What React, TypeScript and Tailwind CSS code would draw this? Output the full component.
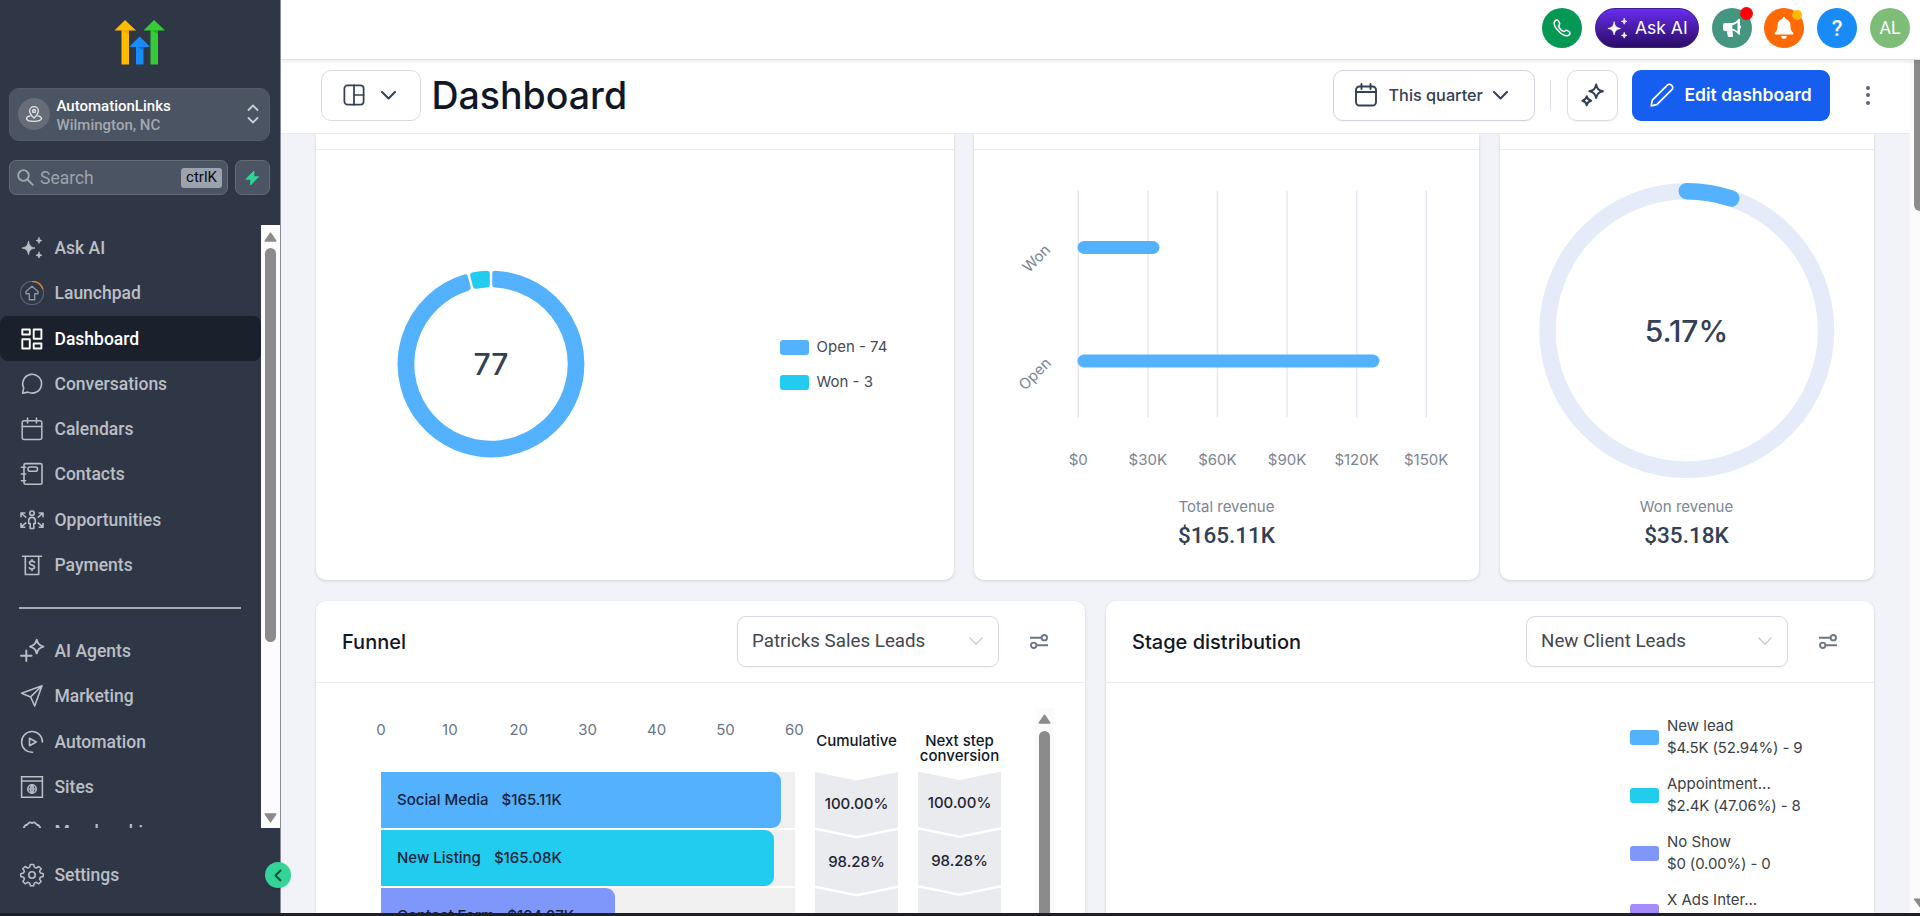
import type { ReactNode } from "react";

type IconProps = { children: ReactNode; className?: string; size?: number; w?: number };

function Ico({ children, className = "", size = 24, w = 1.5 }: IconProps) {
  return (
    <svg
      width={size}
      height={size}
      viewBox="0 0 24 24"
      fill="none"
      stroke="currentColor"
      strokeWidth={w}
      strokeLinecap="round"
      strokeLinejoin="round"
      className={`shrink-0 ${className}`}
    >
      {children}
    </svg>
  );
}

function Chevron({ className = "" }: { className?: string }) {
  return (
    <svg width="15" height="9" viewBox="0 0 15 9" fill="none" stroke="currentColor" strokeWidth="2" strokeLinecap="round" strokeLinejoin="round" className={`shrink-0 ${className}`}>
      <path d="M1 1l6.5 6.5L14 1" />
    </svg>
  );
}

const sparkleSolid = (
  <g fill="currentColor" stroke="currentColor" strokeWidth="0.8">
    <path d="M8.500 5.400C9.600 10 10.500 10.900 15 12c-4.500 1.100-5.400 2-6.500 6.600C7.400 14 6.500 13.100 2 12c4.500-1.100 5.400-2 6.500-6.600z" />
    <path d="M19 1.700c.5 2 .9 2.400 2.900 2.900-2 .5-2.400.9-2.900 2.900-.5-2-.9-2.400-2.900-2.900 2-.5 2.400-.9 2.900-2.900z" />
    <path d="M19 16.300c.5 2 .9 2.400 2.900 2.900-2 .5-2.400.9-2.900 2.900-.5-2-.9-2.400-2.900-2.900 2-.5 2.400-.9 2.900-2.900z" />
  </g>
);

const calendar = (
  <>
    <rect x="2.200" y="3.800" width="19.600" height="18.700" rx="2" />
    <path d="M2.200 9.500h19.600M7.500 1v5M16.500 1v5" />
  </>
);

const topItems = [
  { label: "Ask AI", icon: <Ico>{sparkleSolid}</Ico> },
  {
    label: "Launchpad",
    icon: (
      <Ico w={1.400}>
        <circle cx="12" cy="12" r="11.600" stroke="#566072" />
        <path d="M12 .4a11.600 11.600 0 0 1 10.900 7.600" stroke="#dd8433" strokeLinecap="butt" />
        <path d="M12 5.300l6 5.200v2.200h-3.300v6H9.300v-6H6v-2.200z" stroke="#8d94a1" />
      </Ico>
    ),
  },
  {
    label: "Dashboard",
    active: true,
    icon: (
      <Ico w={1.900}>
        <path d="M2.300 2.500h7.500v5H2.300zM13.700 2.500h7.700v9.300h-7.700zM2.300 12.200h7.500v9.300H2.300zM13.700 16.500h7.700v5h-7.700z" />
      </Ico>
    ),
  },
  {
    label: "Conversations",
    icon: (
      <Ico w={1.600}>
        <path d="M2.600 21.300l1.100-5.500A9.400 9.400 0 1 1 8 20.100z" />
      </Ico>
    ),
  },
  { label: "Calendars", icon: <Ico w={1.500}>{calendar}</Ico> },
  {
    label: "Contacts",
    icon: (
      <Ico w={1.600}>
        <rect x="4" y="1.600" width="18" height="20.600" rx="1.500" />
        <rect x="8" y="5" width="9.500" height="4.300" rx="2" />
        <path d="M1.400 5.200h4.200M1.400 12h4.200M1.400 18.700h4.200" />
      </Ico>
    ),
  },
  {
    label: "Opportunities",
    icon: (
      <Ico w={1.600}>
        <circle cx="12" cy="5.200" r="2.200" />
        <path d="M12 9.400c2.400 0 3.300 1.300 3.300 3.100v3h-1.500v5h-3.600v-5H8.700v-3c0-1.800.9-3.100 3.300-3.100z" />
        <path d="M1 8.500V5h3.500M1.500 5.500L5.600 9M1 15.700v3.500h3.500M1.500 18.700l4.100-3.500M19.500 5H23v3.500M22.500 5.500L18.400 9M19.500 19.200H23v-3.500M22.500 18.700l-4.100-3.500" strokeLinecap="square" />
      </Ico>
    ),
  },
  {
    label: "Payments",
    icon: (
      <Ico w={1.600}>
        <path d="M2.500 3.200h19M5.300 3.200v18.300h13.400V3.200" />
        <path d="M14.500 9.300c-.5-.8-1.400-1.100-2.500-1.100-1.500 0-2.500.7-2.500 1.900 0 2.700 5 1.300 5 4 0 1.200-1 1.900-2.500 1.900-1.200 0-2.200-.4-2.600-1.200M12 6.800v1.400M12 16v1.400" strokeWidth="1.700" />
      </Ico>
    ),
  },
];

const bottomItems = [
  {
    label: "AI Agents",
    icon: (
      <Ico w={1.900} className="overflow-visible">
        <path d="M16.700.7c1.200 4.200 2.500 5.500 6.700 6.900-4.200 1.300-5.500 2.600-6.700 6.800-1.200-4.200-2.500-5.500-6.700-6.800 4.200-1.400 5.500-2.700 6.700-6.900zM6.300 11.500v10.600M1 16.800h10.600" />
      </Ico>
    ),
  },
  {
    label: "Marketing",
    icon: (
      <Ico w={1.600}>
        <path d="M22 1.700L1.600 9.300l9 3.600L14.700 22zM22 1.700L10.600 12.900" />
      </Ico>
    ),
  },
  {
    label: "Automation",
    icon: (
      <Ico w={1.600}>
        <path d="M12.500 22.300A10.400 10.400 0 1 1 22.400 12" />
        <path d="M9.500 8.300v7.400l6.700-3.700z" />
      </Ico>
    ),
  },
  {
    label: "Sites",
    icon: (
      <Ico w={1.500}>
        <path d="M1.600 1.700h20.800v20.600H1.600zM1.600 6h20.800" strokeLinejoin="miter" />
        <circle cx="12" cy="14" r="4.200" />
        <path d="M7.800 14h8.400M12 9.800v8.400M12 9.800c-2.200 2.500-2.200 5.900 0 8.400 2.200-2.500 2.200-5.900 0-8.400z" strokeWidth="1.200" />
      </Ico>
    ),
  },
  {
    label: "Memberships",
    icon: (
      <Ico w={1.800}>
        <path d="M3.500 9c.5-2.500 1.500-4 4-4.500C8.300 2.500 10 1.800 12 3c2-1.200 3.700-.5 4.500 1.500 2.500.5 3.500 2 4 4.500v11h-17z" />
      </Ico>
    ),
  },
];

function NavItem({ label, icon, active }: { label: string; icon: ReactNode; active?: boolean }) {
  return (
    <div
      className={
        active
          ? "flex h-[45.25px] shrink-0 items-center gap-[11px] rounded-lg bg-[#1a202c] pl-[19.5px] text-[17.5px] font-medium text-white"
          : "flex h-[45.25px] shrink-0 items-center gap-[11px] pl-[19.5px] text-[17.5px] font-medium text-[#bbbfc5]"
      }
    >
      {icon}
      <span>{label}</span>
    </div>
  );
}

function Triangle({ down }: { down?: boolean }) {
  return (
    <svg width="13" height="10" viewBox="0 0 13 10" className={down ? "rotate-180" : ""}>
      <path d="M6.500 1.200L11.800 9H1.200z" fill="#8b8b8b" stroke="#8b8b8b" strokeWidth="1.400" strokeLinejoin="round" />
    </svg>
  );
}

function Logo() {
  return (
    <svg width="52" height="46" viewBox="0 0 52 46">
      <path d="M7.500 11h7.500v34.500H7.500z" fill="#ffbc00" />
      <path d="M7.500 11h7.500v4z" fill="#f29f05" />
      <path d="M11 1l11 10.500H.5z" fill="#ffbc00" />
      <path d="M36.500 11H44v34.500h-7.500z" fill="#37ca37" />
      <path d="M36.500 11H44v4z" fill="#1fae1f" />
      <path d="M40 1l11 10.500H29.500z" fill="#37ca37" />
      <path d="M22 27h7.500v18.500H22z" fill="#188bf6" />
      <path d="M22 27h7.500v4.500z" fill="#0c6fcf" />
      <path d="M25.700 17.500l10.500 10.500H15z" fill="#188bf6" />
    </svg>
  );
}

function Sidebar() {
  return (
    <aside className="relative z-20 flex h-full w-[281px] shrink-0 flex-col border-r border-[#858b97] bg-[#2f3747] font-['Roboto',sans-serif]">
      <div className="flex h-[87.500px] shrink-0 items-start justify-center pt-[19px]">
        <Logo />
      </div>
      <div className="mx-[9px] flex h-[53px] w-[261px] shrink-0 items-center rounded-[10px] border border-[#535b68] bg-[#4b5462] pr-[10px] pl-[8px]">
        <div className="flex size-8 items-center justify-center rounded-full bg-[#666d78] text-[#e5e7eb]">
          <Ico size={18} w={1.800}>
            <path d="M12 17.500c-3.500-3.500-5.800-6-5.800-9.500a5.800 5.800 0 0 1 11.600 0c0 3.500-2.300 6-5.800 9.500z" />
            <circle cx="12" cy="8" r="2" />
            <path d="M7 14.500c-3 .6-5 1.800-5 3.500 0 2.300 4.500 3.800 10 3.800s10-1.500 10-3.800c0-1.700-2-2.900-5-3.500" />
          </Ico>
        </div>
        <div className="ml-[6.500px] flex-1 pt-[4px] text-[15px] leading-[19px] font-medium">
          <div className="text-white">AutomationLinks</div>
          <div className="text-[#a3a8b0]">Wilmington, NC</div>
        </div>
        <svg width="12" height="20" viewBox="0 0 12 20" fill="none" stroke="#c9ccd1" strokeWidth="1.800" strokeLinecap="round" strokeLinejoin="round">
          <path d="M1.500 6L6 1.500 10.500 6M1.500 14L6 18.500 10.500 14" />
        </svg>
      </div>
      <div className="mx-[9px] mt-[19.500px] flex h-[35px] w-[261px] shrink-0 gap-[7px]">
        <div className="flex w-[219px] items-center rounded-[7px] border border-[#636b77] bg-[#4b5462] pr-[5px] pl-[7px]">
          <svg width="17" height="17" viewBox="0 0 17 17" fill="none" stroke="#a3a8b0" strokeWidth="1.800" strokeLinecap="round">
            <circle cx="6.500" cy="6.500" r="5.300" />
            <path d="M10.500 10.500l5.300 5.300" />
          </svg>
          <span className="ml-[6px] flex-1 pt-[2px] text-[17.5px] text-[#9ca3af]">Search</span>
          <span className="flex h-[20px] w-[41px] items-center justify-center rounded-[3px] bg-[#9ca3af] text-[15px] text-[#0a0c10]">ctrlK</span>
        </div>
        <div className="flex w-[35px] items-center justify-center rounded-[7px] border border-[#636b77] bg-[#4b5462]">
          <svg width="15" height="16" viewBox="0 0 15 16" fill="#34d399" stroke="#34d399" strokeWidth="1" strokeLinejoin="round">
            <path d="M9 1L1 9.200h5L5.500 15l8-8.200H8.700z" />
          </svg>
        </div>
      </div>
      <div className="mt-[30px] flex h-[603px] shrink-0">
        <nav className="flex h-full w-[261px] flex-col overflow-hidden pt-[0.500px]">
          {topItems.map((it) => (
            <NavItem key={it.label} {...it} />
          ))}
          <div className="mt-[19px] mb-[20px] ml-[19px] h-[2px] w-[222px] shrink-0 bg-[#a5aab3]" />
          {bottomItems.map((it) => (
            <NavItem key={it.label} {...it} />
          ))}
        </nav>
        <div className="flex h-full w-[19px] flex-col items-center bg-[#fcfcfc] pt-[7px] pb-[5px]">
          <Triangle />
          <div className="mt-[6px] h-[394px] w-[11px] rounded-full bg-[#8b8b8b]" />
          <div className="flex-1" />
          <Triangle down />
        </div>
      </div>
      <div className="flex flex-1 items-center gap-[11px] pt-[11px] pb-[2px] pl-[19.500px] text-[17.5px] font-medium text-[#bbbfc5]">
        <Ico w={1.600}>
          <circle cx="12" cy="12" r="3.200" />
          <path d="M10.300 1.200h3.400l.7 2.900 2 .9 2.600-1.600 2.400 2.400-1.600 2.600.8 2 3 .7v2.900l-3 .8-.8 2 1.600 2.600-2.400 2.400-2.600-1.600-2 .9-.7 2.900h-3.400l-.7-2.900-2-.9L5 21.800l-2.400-2.400 1.600-2.600-.8-2-3-.8v-2.900l3-.7.8-2L2.600 5.800 5 3.400 7.600 5l2-.9z" transform="translate(.3 .3) scale(.975 .94)" />
        </Ico>
        <span>Settings</span>
      </div>
      <div className="absolute top-[862px] left-[265px] flex size-[26px] items-center justify-center rounded-full bg-[#34d399] text-[#14532d] shadow">
        <svg width="8" height="13" viewBox="0 0 8 13" fill="none" stroke="currentColor" strokeWidth="2" strokeLinecap="round" strokeLinejoin="round">
          <path d="M6.500 1.500l-5 5 5 5" />
        </svg>
      </div>
    </aside>
  );
}

function TopBar() {
  return (
    <div className="relative z-10 flex h-[60px] shrink-0 items-start justify-end border-b border-[#e3e3e5] bg-white pt-[8px] pr-[10px] shadow-[0_2px_4px_rgba(0,0,0,0.08)]">
      <div className="mr-[13px] flex size-10 items-center justify-center rounded-full bg-[#059855] text-white">
        <svg width="18" height="18" viewBox="0 0 18 18" fill="none" stroke="currentColor" strokeWidth="1.500" strokeLinejoin="round">
          <path d="M1.200 3.600C1.500 2.400 2.800 1 4.200 1c.8 0 1.300.9 1.900 2.100.6 1.100.9 1.800.3 2.600-.5.700-1 .9-.8 1.600.6 2 3.100 4.500 5.100 5.100.700.2.9-.3 1.600-.8.8-.6 1.500-.3 2.600.3 1.200.6 2.100 1.100 2.100 1.900 0 1.400-1.400 2.700-2.600 3C9.500 17.500.5 8.500 1.200 3.600z" />
        </svg>
      </div>
      <div className="mr-[13px] flex h-10 w-[104px] items-center gap-[6px] rounded-full border border-[#3d1c94] bg-gradient-to-b from-[#6a2cf0] to-[#2a0d66] pl-[10px] font-['Inter',sans-serif] text-[17.5px] text-white">
        <Ico size={23}>{sparkleSolid}</Ico>
        <span className="whitespace-nowrap">Ask AI</span>
      </div>
      <div className="relative mr-[12px] flex size-10 items-center justify-center rounded-full bg-[#449680]">
        <svg width="20" height="20" viewBox="0 0 20 20">
          <path d="M3 5h6.500c2.700 0 5-1.600 7-4 .6-.6 1.500-.3 1.500.6v14.300c0 .9-.9 1.200-1.500.6-1.700-2-3.700-3.500-6-3.900L11 17.500c.2 1-.3 1.500-1.200 1.500H7.200c-.8 0-1.300-.4-1.500-1.200L4.800 13H3a2 2 0 0 1-2-2V7a2 2 0 0 1 2-2z" fill="#fff" />
          <path d="M10.300 7.200c2-.4 3.700-1.300 5.200-2.700v9c-1.500-1.400-3.200-2.300-5.200-2.700z" fill="#449680" />
          <path d="M18 7.200c1.600.8 1.600 2.800 0 3.600z" fill="#fff" />
        </svg>
        <div className="absolute -top-px left-[28px] size-[13px] rounded-full bg-[#ff0008]" />
      </div>
      <div className="relative mr-[13px] flex size-10 items-center justify-center rounded-full bg-[#ff6a06]">
        <svg width="20" height="22" viewBox="0 0 20 22" fill="#fff">
          <path d="M10 0c.9 0 1.500.6 1.500 1.500v.6c3 .7 5 3.200 5 6.400 0 4.300 1 5.700 2.500 7.100.8.9.3 2-.8 2H1.800c-1.100 0-1.600-1.100-.8-2C2.500 14.200 3.500 12.800 3.500 8.500c0-3.200 2-5.700 5-6.400v-.6C8.500.6 9.100 0 10 0zM7.300 19h5.400a2.700 2.700 0 0 1-5.400 0z" />
        </svg>
        <div className="absolute top-[2px] left-[28px] size-[10px] rounded-full bg-[#ffb906]" />
      </div>
      <div className="mr-[13px] flex size-10 items-center justify-center rounded-full bg-[#188bf6] font-['Roboto',sans-serif] text-[22px] font-medium text-white">?</div>
      <div className="flex size-10 items-center justify-center rounded-full bg-[#7ebd78] font-['Roboto',sans-serif] text-[17.5px] text-white">AL</div>
    </div>
  );
}

function ActionBar() {
  return (
    <div className="flex h-[73.500px] shrink-0 items-center border-b border-[#e9eaee] bg-white pb-[2px] pl-[40px] text-[#344054]">
      <div className="flex h-[51px] w-[100px] items-center justify-between rounded-[10px] border border-[#d9dce3] pr-[24px] pl-[21px]">
        <Ico size={22} w={1.900}>
          <rect x="1.500" y="1.500" width="21" height="21" rx="3.500" />
          <path d="M12 1.500v21M12 12h10.500" />
        </Ico>
        <Chevron />
      </div>
      <h1 className="ml-[10.500px] flex-1 pt-px text-[37.5px] leading-none font-medium text-[#101828]">Dashboard</h1>
      <div className="flex h-[51px] w-[202px] items-center rounded-[10px] border border-[#d0d5dd] pl-[20.500px] shadow-[0_1px_2px_rgba(16,24,40,0.05)]">
        <Ico size={24} w={1.900}>
          <rect x="2" y="3.500" width="20" height="19" rx="3.500" />
          <path d="M2 9h20M7.500 1v5M16.500 1v5" />
        </Ico>
        <span className="mr-[10px] ml-[10.500px] text-[16.25px] font-medium">This quarter</span>
        <Chevron />
      </div>
      <div className="mx-[15.500px] h-[30px] w-px bg-[#dfe2e8]" />
      <div className="flex size-[51px] items-center justify-center rounded-[10px] border border-[#d9dce3] shadow-[0_1px_2px_rgba(16,24,40,0.05)]">
        <Ico size={25} w={1.900}>
          <path d="M15.500 1.500c1 4.200 2.300 5.500 6.500 6.500-4.200 1-5.500 2.300-6.500 6.500-1-4.200-2.300-5.500-6.500-6.500 4.200-1 5.500-2.300 6.500-6.500z" />
          <path d="M6.500 12.700c.6 2.800 1.500 3.700 4.200 4.300-2.700.7-3.600 1.600-4.200 4.300-.6-2.700-1.500-3.600-4.200-4.300 2.700-.6 3.600-1.500 4.200-4.300z" />
        </Ico>
      </div>
      <div className="ml-[14px] flex h-[51px] w-[198px] items-center gap-[11px] rounded-[9px] bg-[#155eef] pl-[18px] text-white">
        <Ico size={24} w={1.700}>
          <path d="M1.200 22.800l1.100-5.600L17.400 2.100a2.700 2.700 0 0 1 3.900 0l.6.6a2.700 2.700 0 0 1 0 3.900L6.800 21.700z" />
        </Ico>
        <span className="text-[17.5px] font-semibold whitespace-nowrap">Edit dashboard</span>
      </div>
      <div className="mr-[40.500px] ml-[36px] flex flex-col gap-[3.500px]">
        <div className="size-[4px] rounded-full bg-[#5d6675]" />
        <div className="size-[4px] rounded-full bg-[#5d6675]" />
        <div className="size-[4px] rounded-full bg-[#5d6675]" />
      </div>
    </div>
  );
}

function sector(cx: number, cy: number, r0: number, r1: number, a0: number, a1: number) {
  const round = 3;
  const pad = 1.2 + round;
  const ri = r0 + round;
  const ro = r1 - round;
  const pt = (r: number, a: number) => `${(cx + r * Math.sin(a)).toFixed(2)} ${(cy - r * Math.cos(a)).toFixed(2)}`;
  const di = Math.asin(pad / ri);
  const d = Math.asin(pad / ro);
  const large = a1 - a0 > Math.PI ? 1 : 0;
  return `M${pt(ro, a0 + d)} A${ro} ${ro} 0 ${large} 1 ${pt(ro, a1 - d)} L${pt(ri, a1 - di)} A${ri} ${ri} 0 ${large} 0 ${pt(ri, a0 + di)} Z`;
}

const split = (74 / 77) * Math.PI * 2;

function StatusCard() {
  return (
    <section className="flex h-full w-[637.500px] flex-col rounded-b-[10px] bg-white shadow-[0_1px_3px_rgba(16,24,40,0.16)]">
      <div className="h-[16px] shrink-0 border-b border-[#eaecf0]" />
      <div className="flex flex-1 items-center pb-[2px]">
        <svg width="188" height="188" viewBox="0 0 188 188" className="ml-[81px]" strokeWidth="6" strokeLinejoin="round">
          <path d={sector(94, 94, 76.7, 93.4, 0, split)} fill="#53b1fd" stroke="#53b1fd" />
          <path d={sector(94, 94, 76.7, 93.4, split, Math.PI * 2)} fill="#22ccee" stroke="#22ccee" />
          <text x="94" y="105" textAnchor="middle" className="fill-[#344054] text-[30px] font-medium">77</text>
        </svg>
        <div className="ml-[195px] flex flex-col gap-[15px] pt-[2px] text-[15px] leading-[20px] text-[#444b55]">
          <div className="flex items-center gap-[7.500px]">
            <div className="h-[15px] w-[29px] rounded-[3px] bg-[#53b1fd]" />
            Open - 74
          </div>
          <div className="flex items-center gap-[7.500px]">
            <div className="h-[15px] w-[29px] rounded-[3px] bg-[#22ccee]" />
            Won - 3
          </div>
        </div>
      </div>
    </section>
  );
}

const revenueTicks = ["$0", "$30K", "$60K", "$90K", "$120K", "$150K"];

function RevenueCard() {
  return (
    <section className="flex h-full w-[505px] flex-col items-center rounded-b-[10px] bg-white shadow-[0_1px_3px_rgba(16,24,40,0.16)]">
      <div className="h-[16px] w-full shrink-0 border-b border-[#eaecf0]" />
      <svg width="505" height="345" viewBox="974.500 149.500 505 345">
        {revenueTicks.map((t, i) => (
          <g key={t}>
            <rect x={1078 + i * 69.6} y="190" width="1.500" height="227" fill="#e4e8f2" />
            <text x={1078.700 + i * 69.6} y="464.500" textAnchor="middle" className="fill-[#7c8594] text-[15px]">{t}</text>
          </g>
        ))}
        <rect x="1078" y="240.500" width="82" height="13" rx="6.500" fill="#53b1fd" />
        <rect x="1078" y="354" width="302" height="13" rx="6.500" fill="#53b1fd" />
        <text x="1037" y="258" textAnchor="middle" dy="5" transform="rotate(-45 1037 258)" className="fill-[#7c8594] text-[15px]">Won</text>
        <text x="1035.500" y="373.500" textAnchor="middle" dy="5" transform="rotate(-45 1035.500 373.500)" className="fill-[#7c8594] text-[15px]">Open</text>
      </svg>
      <Total label="Total revenue" value="$165.11K" />
    </section>
  );
}

function Total({ label, value }: { label: string; value: string }) {
  return (
    <div className="flex flex-col items-center pt-[2.500px]">
      <div className="text-[15px] leading-[20px] text-[#7c8594]">{label}</div>
      <div className="mt-[4px] font-['Roboto',sans-serif] text-[22.5px] leading-[28px] font-medium text-[#344054]">{value}</div>
    </div>
  );
}

function ConversionCard() {
  const r = 139.3;
  const end = 0.0517 * Math.PI * 2;
  return (
    <section className="flex h-full w-[374px] flex-col items-center rounded-b-[10px] bg-white shadow-[0_1px_3px_rgba(16,24,40,0.16)]">
      <div className="h-[16px] w-full shrink-0 border-b border-[#eaecf0]" />
      <svg width="374" height="345" viewBox="1500.500 149.500 374 345" fill="none" strokeWidth="16.500">
        <circle cx="1687.300" cy="330" r={r} stroke="#e5ebf8" />
        <path d={`M1687.300 ${330 - r} A${r} ${r} 0 0 1 ${1687.300 + r * Math.sin(end)} ${330 - r * Math.cos(end)}`} stroke="#53b1fd" strokeLinecap="round" />
        <text x="1687" y="341" textAnchor="middle" strokeWidth="0" className="fill-[#344054] text-[30px] font-medium">5.17%</text>
      </svg>
      <Total label="Won revenue" value="$35.18K" />
    </section>
  );
}

function CardHeader({ title, selected }: { title: string; selected: string }) {
  return (
    <div className="flex h-[82px] shrink-0 items-center border-b border-[#eaecf0] pl-[26px]">
      <h2 className="flex-1 text-[20px] font-medium text-[#101828]">{title}</h2>
      <div className="flex h-[51px] w-[262px] items-center justify-between rounded-[9px] border-[1.5px] border-[#d5d9e1] pr-[15px] pl-[14px] font-['Roboto',sans-serif] text-[18.75px] text-[#43474e] shadow-[0_1px_2px_rgba(16,24,40,0.05)]">
        {selected}
        <svg width="14" height="9" viewBox="0 0 14 9" fill="none" stroke="#c9cbd0" strokeWidth="1.400" strokeLinecap="round">
          <path d="M1 1l6 6.300L13 1" />
        </svg>
      </div>
      <svg width="18" height="15" viewBox="0 0 18 15" fill="none" stroke="#6b7681" strokeWidth="1.900" className="mr-[37px] ml-[31px]">
        <path d="M0 3.700h11.500M6.500 11.300H18" />
        <circle cx="14.300" cy="3.700" r="2.700" />
        <circle cx="3.700" cy="11.300" r="2.700" />
      </svg>
    </div>
  );
}

const funnelTicks = ["0", "10", "20", "30", "40", "50", "60"];
const funnelRows = [
  { name: "Social Media", value: "$165.11K", bar: "w-[400px] bg-[#53b1fd]", pct: "100.00%" },
  { name: "New Listing", value: "$165.08K", bar: "w-[393px] bg-[#22ccee]", pct: "98.28%" },
  { name: "Contact Form", value: "$124.27K", bar: "w-[234px] bg-[#7f96fa]", pct: "58.62%" },
];

function RateColumn({ heading, gap }: { heading: ReactNode; gap: string }) {
  return (
    <div className={`flex w-[83px] shrink-0 flex-col ${gap}`}>
      <div className="flex h-[39px] shrink-0 justify-center text-center text-[15px] leading-[15px] font-medium whitespace-nowrap text-[#101828]">{heading}</div>
      {funnelRows.map((r) => (
        <div key={r.name} className="mb-[-6px] flex h-[64px] shrink-0 items-center justify-center bg-[#eaebef] text-[15px] font-medium text-[#1d2433] [clip-path:polygon(0_0,50%_8.5px,100%_0,100%_55.5px,50%_64px,0_55.5px)]">
          {r.pct}
        </div>
      ))}
    </div>
  );
}

function FunnelCard() {
  return (
    <section className="flex h-full w-[769px] flex-col rounded-t-[10px] bg-white shadow-[0_1px_3px_rgba(16,24,40,0.16)]">
      <CardHeader title="Funnel" selected="Patricks Sales Leads" />
      <div className="flex flex-1 overflow-hidden">
        <div className="ml-[65px] w-[414px] shrink-0 pt-[36.500px]">
          <div className="-ml-[34.450px] flex text-[15px] leading-[20px] text-[#6b7585]">
            {funnelTicks.map((t) => (
              <div key={t} className="w-[68.900px] shrink-0 text-center">{t}</div>
            ))}
          </div>
          <div className="mt-[32.500px] flex flex-col gap-[2.500px]">
            {funnelRows.map((r) => (
              <div key={r.name} className="h-[55.500px] w-full bg-[#f0f0f0]">
                <div className={`flex h-full items-center gap-[13px] rounded-r-[9px] pl-[16px] text-[15px] font-medium whitespace-nowrap text-[#16243c] ${r.bar}`}>
                  <span>{r.name}</span>
                  <span>{r.value}</span>
                </div>
              </div>
            ))}
          </div>
        </div>
        <RateColumn heading="Cumulative" gap="ml-[20px] pt-[50px]" />
        <RateColumn heading={<span>Next step<br />conversion</span>} gap="ml-[20px] pt-[49.500px]" />
        <div className="mt-[25px] ml-[34px] flex w-[19px] flex-col items-center bg-[#fbfbfb] pt-[6px]">
          <Triangle />
          <div className="mt-[7px] w-[11px] flex-1 rounded-t-full bg-[#8b8b8b]" />
        </div>
      </div>
    </section>
  );
}

const stages = [
  { name: "New lead", detail: "$4.5K (52.94%) - 9", color: "bg-[#53b1fd]" },
  { name: "Appointment...", detail: "$2.4K (47.06%) - 8", color: "bg-[#22ccee]" },
  { name: "No Show", detail: "$0 (0.00%) - 0", color: "bg-[#7f96fa]" },
  { name: "X Ads Inter...", detail: "$0 (0.00%) - 0", color: "bg-[#a48afb]" },
];

function StageCard() {
  return (
    <section className="flex h-full w-[768px] flex-col rounded-t-[10px] bg-white shadow-[0_1px_3px_rgba(16,24,40,0.16)]">
      <CardHeader title="Stage distribution" selected="New Client Leads" />
      <div className="ml-[524px] flex flex-1 flex-col gap-[13px] overflow-hidden pt-[31.500px]">
        {stages.map((s) => (
          <div key={s.name} className="flex shrink-0 items-center gap-[8px]">
            <div className={`h-[15px] w-[29px] rounded-[3px] ${s.color}`} />
            <div className="text-[15px] leading-[22.500px] whitespace-nowrap text-[#3b3f46]">
              <div>{s.name}</div>
              <div className="tracking-[-0.15px]">{s.detail}</div>
            </div>
          </div>
        ))}
      </div>
    </section>
  );
}

export default function App() {
  return (
    <div className="flex h-[916px] w-[1920px] flex-col overflow-hidden bg-[#202024] font-['Inter',sans-serif]">
      <div className="flex h-[913px] shrink-0">
        <Sidebar />
        <div className="flex h-full flex-1 flex-col">
          <TopBar />
          <div className="flex min-h-0 flex-1">
            <div className="flex flex-1 flex-col bg-[#f2f3f8]">
              <ActionBar />
              <div className="flex flex-1 flex-col gap-[21px] overflow-hidden pl-[35px]">
                <div className="flex h-[446.500px] shrink-0 gap-[20.500px]">
                  <StatusCard />
                  <RevenueCard />
                  <ConversionCard />
                </div>
                <div className="flex min-h-0 flex-1 gap-[21px]">
                  <FunnelCard />
                  <StageCard />
                </div>
              </div>
            </div>
            <div className="flex w-[10px] flex-col items-end justify-between overflow-hidden bg-[#fbfbfb] pb-[5px]">
              <div className="h-[151px] w-[6px] rounded-bl-[6px] bg-[#8b8b8b]" />
              <svg width="7" height="10" viewBox="0 0 7 10">
                <path d="M1 1h8L7 9z" fill="#8b8b8b" stroke="#8b8b8b" strokeLinejoin="round" />
              </svg>
            </div>
          </div>
        </div>
      </div>
    </div>
  );
}
